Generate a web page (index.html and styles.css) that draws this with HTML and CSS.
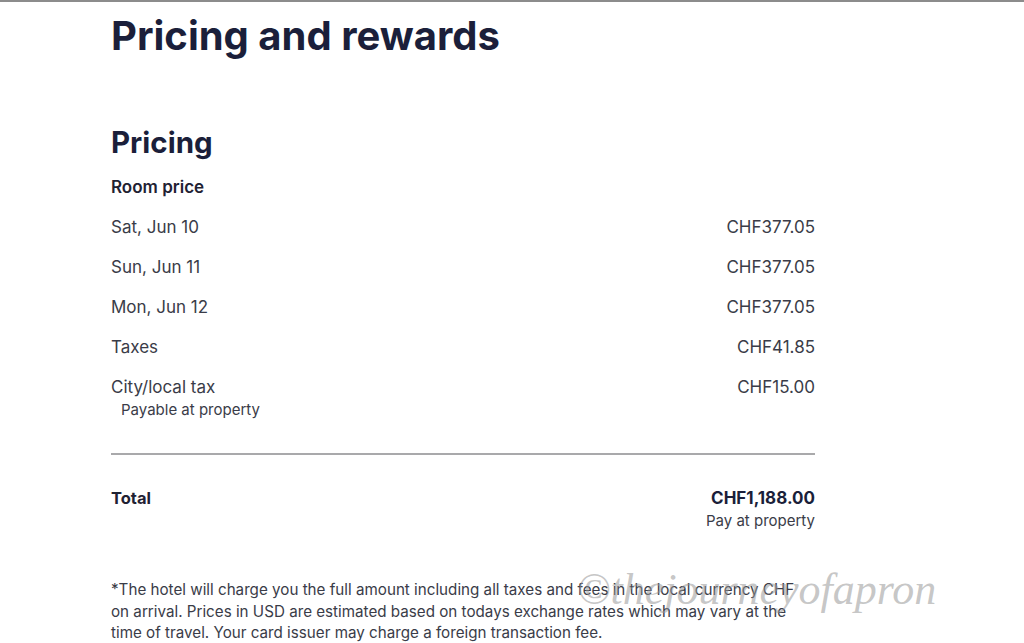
FILE: index.html
```html
<!DOCTYPE html>
<html lang="en">
<head>
<meta charset="utf-8">
<title>Pricing and rewards</title>
<link rel="stylesheet" href="styles.css">
</head>
<body>
<div class="page">
  <main class="content">
    <h1 class="title">Pricing and rewards</h1>
    <h2 class="section">Pricing</h2>
    <div class="sub">Room price</div>
    <div class="row"><span>Sat, Jun 10</span><span>CHF377.05</span></div>
    <div class="row"><span>Sun, Jun 11</span><span>CHF377.05</span></div>
    <div class="row"><span>Mon, Jun 12</span><span>CHF377.05</span></div>
    <div class="row"><span>Taxes</span><span>CHF41.85</span></div>
    <div class="row row-local">
      <div class="col">
        <span>City/local tax</span>
        <span class="note">Payable at property</span>
      </div>
      <span>CHF15.00</span>
    </div>
    <hr class="divider">
    <div class="total">
      <span class="total-label">Total</span>
      <div class="total-right">
        <span class="total-amount">CHF1,188.00</span>
        <span class="total-note">Pay at property</span>
      </div>
    </div>
    <p class="foot">*The hotel will charge you the full amount including all taxes and fees in the local currency CHF on arrival. Prices in USD are estimated based on todays exchange rates which may vary at the time of travel. Your card issuer may charge a foreign transaction fee.</p>
  </main>
  <div class="watermark">©thejourneyofapron</div>
</div>
</body>
</html>
```

FILE: styles.css
```css
* { box-sizing: border-box; }
html, body { margin: 0; padding: 0; background: #fff; }
body {
  font-family: "Inter", "Noto Sans", sans-serif;
  color: #3a3c48;
  overflow: hidden;
  height: 643px;
}
.page {
  position: relative;
  height: 643px;
  border-top: 2px solid #8c8c8c;
}
.content {
  width: 704px;
  margin-left: 111px;
  display: flex;
  flex-direction: column;
}
.title {
  margin: 10px 0 0;
  font-size: 40px;
  line-height: 48px;
  font-weight: 700;
  color: #1b1f3a;
}
.section {
  margin: 63px 0 0;
  font-size: 29.5px;
  line-height: 38px;
  font-weight: 700;
  color: #1b1f3a;
}
.sub {
  margin-top: 15px;
  font-size: 17px;
  line-height: 22px;
  font-weight: 600;
  color: #1f2233;
}
.row {
  display: flex;
  justify-content: space-between;
  align-items: flex-start;
  margin-top: 18px;
  font-size: 17px;
  line-height: 22px;
}
.col { display: flex; flex-direction: column; }
.note {
  font-size: 15px;
  line-height: 24px;
  padding-left: 10px;
}
.divider {
  margin: 31px 0 0;
  border: 0;
  border-top: 2px solid #a9a9ab;
  height: 0;
}
.total {
  display: flex;
  justify-content: space-between;
  align-items: flex-start;
  margin-top: 32px;
}
.total-label {
  font-size: 16.5px;
  line-height: 22px;
  font-weight: 700;
  color: #1f2233;
}
.total-right {
  display: flex;
  flex-direction: column;
  align-items: flex-end;
}
.total-amount {
  font-size: 17px;
  line-height: 22px;
  font-weight: 700;
  color: #1b1f3a;
}
.total-note {
  font-size: 15px;
  line-height: 24px;
}
.foot {
  margin: 46px 0 0;
  font-size: 15.2px;
  line-height: 21.5px;
  width: 692px;
}
.watermark {
  position: absolute;
  left: 577px;
  top: 560px;
  font-family: "Liberation Serif", serif;
  font-style: italic;
  font-size: 44px;
  line-height: 56px;
  color: rgba(150, 150, 150, 0.55);
  white-space: nowrap;
  pointer-events: none;
}
```
